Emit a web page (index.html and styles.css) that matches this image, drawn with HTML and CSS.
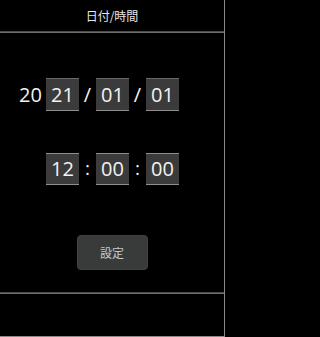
FILE: index.html
```html
<!DOCTYPE html>
<html lang="ja">
<head>
<meta charset="utf-8">
<title>日付/時間</title>
<link rel="stylesheet" href="styles.css">
</head>
<body>
<div class="screen">
  <header class="header">日付/時間</header>
  <div class="rule"></div>
  <main class="content">
    <div class="row date-row">
      <span class="prefix">20</span>
      <span class="field">21</span>
      <span class="sep">/</span>
      <span class="field">01</span>
      <span class="sep">/</span>
      <span class="field">01</span>
    </div>
    <div class="row time-row">
      <span class="prefix"></span>
      <span class="field">12</span>
      <span class="sep colon">:</span>
      <span class="field">00</span>
      <span class="sep colon">:</span>
      <span class="field">00</span>
    </div>
    <div class="actions">
      <button class="set-btn">設定</button>
    </div>
  </main>
  <div class="rule"></div>
  <footer class="footer"></footer>
</div>
</body>
</html>
```
FILE: styles.css
```css
html, body {
  margin: 0;
  padding: 0;
  background: #000;
}
.screen {
  width: 225px;
  height: 337px;
  box-sizing: border-box;
  border-right: 1px solid #8a8a8a;
  border-bottom: 1px solid #8a8a8a;
  background: #000;
  display: flex;
  flex-direction: column;
  font-family: "Open Sans", "Noto Sans CJK JP", sans-serif;
  color: #f2f2f2;
}
.header {
  height: 31px;
  display: flex;
  align-items: center;
  justify-content: center;
  font-family: "Noto Sans CJK JP", sans-serif;
  font-size: 12px;
  color: #e8e8e8;
}
.rule {
  height: 0;
  border-top: 1px solid #4c4c4c;
  border-bottom: 1px solid #6e6e6e;
}
.content {
  height: 259px;
  display: flex;
  flex-direction: column;
  padding-top: 45px;
  box-sizing: border-box;
}
.row {
  display: grid;
  grid-template-columns: 27px 33px 17px 33px 17px 33px;
  margin-left: 19px;
  align-items: center;
}
.time-row {
  margin-top: 41px;
}
.prefix {
  font-size: 20px;
  line-height: 33px;
  text-align: left;
}
.field {
  height: 31px;
  box-sizing: content-box;
  background: #3a3b3a;
  border-top: 1px solid #6a6a6a;
  border-bottom: 1px solid #8e8e8e;
  font-size: 20px;
  line-height: 31px;
  text-align: center;
}
.time-row .field {
  height: 30px;
  line-height: 30px;
  border-top-color: #8e8e8e;
}
.sep {
  font-size: 20px;
  text-align: center;
  line-height: 33px;
}
.colon {
  font-size: 19px;
}
.actions {
  display: flex;
  justify-content: center;
  margin-top: 50px;
}
.set-btn {
  width: 71px;
  height: 35px;
  margin-left: 0;
  background: #393b3a;
  border: 1px solid #414342;
  border-radius: 4px;
  color: #c8c8c8;
  font-family: "Noto Sans CJK JP", sans-serif;
  font-size: 12px;
  padding: 0;
}
.footer {
  flex: 1;
}
```
